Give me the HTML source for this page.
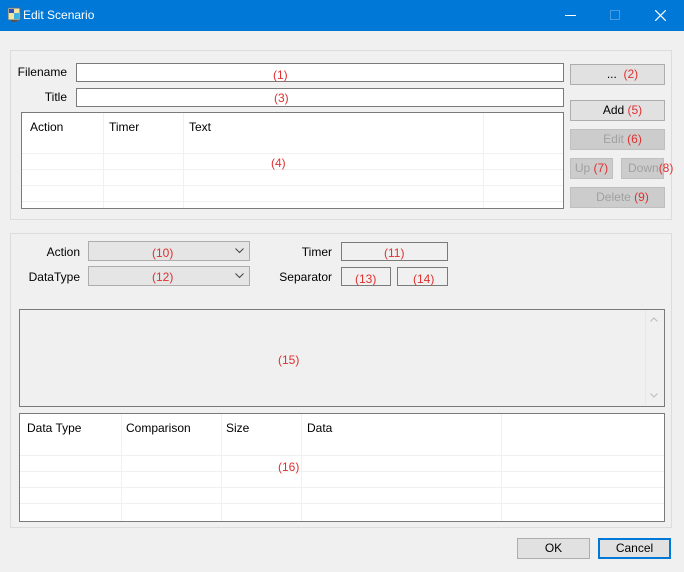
<!DOCTYPE html>
<html><head><style>
*{box-sizing:border-box;margin:0;padding:0}
body{width:684px;height:572px;background:#f0f0f0;font-family:"Liberation Sans",sans-serif;font-size:12px;position:relative;overflow:hidden;color:#000}
.a{position:absolute}
.tb{background:#fff;border:1px solid #7a7a7a}
.btn{background:#e1e1e1;border:1px solid #adadad;text-align:center;line-height:18px}
.dis{background:#cccccc;border:1px solid #bfbfbf;color:#a0a0a0}
.r{color:#e03030}
.lbl{text-align:right}
.vl{position:absolute;top:0;bottom:0;width:1px;background:#f0f0f0}
.hl{position:absolute;left:0;right:0;height:1px;background:#f0f0f0}
</style></head><body>
<div class="a" style="left:0;top:0;width:684px;height:31px;background:#0078d7"></div>
<svg class="a" style="left:7px;top:7px" width="14" height="16"><rect x="1" y="1" width="12" height="12" fill="#f4e6a0" stroke="#4a6a90"/><rect x="2" y="2" width="5" height="4" fill="#3050c0"/><rect x="7" y="6" width="5" height="6" fill="#40b0e0"/><rect x="4" y="13" width="6" height="2" fill="#555"/></svg>
<div class="a" style="left:23px;top:8px;color:#fff;font-size:12px">Edit Scenario</div>
<div class="a" style="left:565px;top:15px;width:11px;height:1px;background:#fff"></div>
<div class="a" style="left:610px;top:10px;width:10px;height:10px;border:1px solid #4a9ae0"></div>
<svg class="a" style="left:655px;top:10px" width="11" height="11"><path d="M0 0L11 11M11 0L0 11" stroke="#fff" stroke-width="1.2"/></svg>

<div class="a" style="left:10px;top:50px;width:662px;height:170px;border:1px solid #dcdcdc"></div>
<div class="a lbl" style="left:10px;top:65px;width:57px">Filename</div>
<div class="a tb" style="left:76px;top:63px;width:488px;height:19px"></div>
<div class="a r" style="left:273px;top:68px">(1)</div>
<div class="a lbl" style="left:10px;top:90px;width:57px">Title</div>
<div class="a tb" style="left:76px;top:88px;width:488px;height:19px"></div>
<div class="a r" style="left:274px;top:91px">(3)</div>
<div class="a tb" style="left:21px;top:112px;width:543px;height:97px;overflow:hidden">
 <div class="vl" style="left:81px"></div><div class="vl" style="left:161px"></div><div class="vl" style="left:461px"></div>
 <div class="hl" style="top:40px"></div><div class="hl" style="top:56px"></div><div class="hl" style="top:72px"></div><div class="hl" style="top:88px"></div>
 <div class="a" style="left:8px;top:7px">Action</div><div class="a" style="left:87px;top:7px">Timer</div><div class="a" style="left:167px;top:7px">Text</div>
 <div class="a r" style="left:249px;top:43px">(4)</div>
</div>
<div class="a btn" style="left:570px;top:64px;width:95px;height:21px">&nbsp;&nbsp;&nbsp;... <span class="r">&nbsp;(2)</span></div>
<div class="a btn" style="left:570px;top:100px;width:95px;height:21px">&nbsp;&nbsp;&nbsp;Add <span class="r">(5)</span></div>
<div class="a btn dis" style="left:570px;top:129px;width:95px;height:21px">&nbsp;&nbsp;&nbsp;Edit <span class="r">(6)</span></div>
<div class="a btn dis" style="left:570px;top:158px;width:43px;height:21px">Up <span class="r">(7)</span></div>
<div class="a btn dis" style="left:621px;top:158px;width:43px;height:21px;text-align:left;padding-left:6px;white-space:nowrap">Down<span class="r">(8)</span></div>
<div class="a btn dis" style="left:570px;top:187px;width:95px;height:21px">&nbsp;&nbsp;&nbsp;Delete <span class="r">(9)</span></div>

<div class="a" style="left:10px;top:233px;width:662px;height:295px;border:1px solid #dcdcdc"></div>
<div class="a lbl" style="left:10px;top:245px;width:70px">Action</div>
<div class="a" style="left:88px;top:241px;width:162px;height:20px;background:#e5e5e5;border:1px solid #adadad"></div>
<div class="a r" style="left:152px;top:246px">(10)</div>
<svg class="a" style="left:235px;top:248px" width="9" height="6"><path d="M0.5 0.5L4.5 4.5L8.5 0.5" stroke="#444" fill="none"/></svg>
<div class="a lbl" style="left:10px;top:270px;width:70px">DataType</div>
<div class="a" style="left:88px;top:266px;width:162px;height:20px;background:#e5e5e5;border:1px solid #adadad"></div>
<div class="a r" style="left:152px;top:270px">(12)</div>
<svg class="a" style="left:235px;top:273px" width="9" height="6"><path d="M0.5 0.5L4.5 4.5L8.5 0.5" stroke="#444" fill="none"/></svg>
<div class="a lbl" style="left:260px;top:245px;width:72px">Timer</div>
<div class="a" style="left:341px;top:242px;width:107px;height:19px;border:1px solid #7a7a7a"></div>
<div class="a r" style="left:384px;top:246px">(11)</div>
<div class="a lbl" style="left:260px;top:270px;width:72px">Separator</div>
<div class="a" style="left:341px;top:267px;width:50px;height:19px;border:1px solid #7a7a7a"></div>
<div class="a r" style="left:355px;top:272px">(13)</div>
<div class="a" style="left:397px;top:267px;width:51px;height:19px;border:1px solid #7a7a7a"></div>
<div class="a r" style="left:413px;top:272px">(14)</div>

<div class="a" style="left:19px;top:309px;width:646px;height:98px;border:1px solid #7a7a7a"></div>
<div class="a" style="left:645px;top:310px;width:1px;height:96px;background:#e8e8e8"></div>
<svg class="a" style="left:650px;top:317px" width="8" height="5"><path d="M0.5 4.5L4 1L7.5 4.5" stroke="#bbb" fill="none"/></svg>
<svg class="a" style="left:650px;top:393px" width="8" height="5"><path d="M0.5 0.5L4 4L7.5 0.5" stroke="#bbb" fill="none"/></svg>
<div class="a r" style="left:278px;top:353px">(15)</div>

<div class="a tb" style="left:19px;top:413px;width:646px;height:109px;overflow:hidden">
 <div class="vl" style="left:101px"></div><div class="vl" style="left:201px"></div><div class="vl" style="left:281px"></div><div class="vl" style="left:481px"></div>
 <div class="hl" style="top:41px"></div><div class="hl" style="top:57px"></div><div class="hl" style="top:73px"></div><div class="hl" style="top:89px"></div>
 <div class="a" style="left:7px;top:7px">Data Type</div><div class="a" style="left:106px;top:7px">Comparison</div><div class="a" style="left:206px;top:7px">Size</div><div class="a" style="left:287px;top:7px">Data</div>
 <div class="a r" style="left:258px;top:46px">(16)</div>
</div>
<div class="a btn" style="left:517px;top:538px;width:73px;height:21px">OK</div>
<div class="a btn" style="left:598px;top:538px;width:73px;height:21px;border:2px solid #0078d7;line-height:17px">Cancel</div>
</body></html>
